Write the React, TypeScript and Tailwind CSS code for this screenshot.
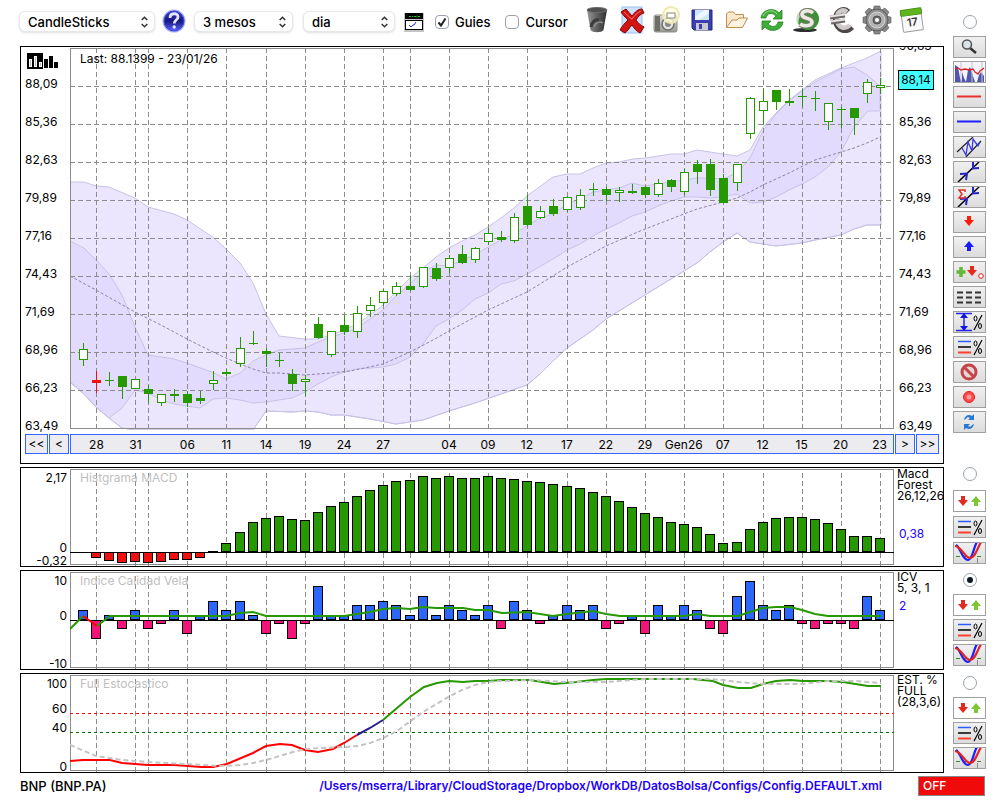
import { useState } from 'react';
import type { ReactNode } from 'react';

type CandleKind = 'up' | 'down' | 'flat' | 'alert';
type Candle = [kind: CandleKind, top: number, bottom: number, high: number, low: number];

const GREEN = '#269900';
const GRID = '#8c8c8c';

// Horizontal centre of the bar with the given index
const barX = (i: number) => 83 + Math.floor(i * 13.0805 + 0.04);

const GRID_BARS = [1, 4, 5, 8, 11, 14, 17, 20, 23, 25, 28, 31, 34, 37, 40, 43, 46, 49, 52, 55, 58, 61];
const PRICE_LINES = [86, 124, 162, 200, 238, 276, 314, 352, 390];

const DATE_LABELS: [number, string][] = [
  [1, '28'], [4, '31'], [8, '06'], [11, '11'], [14, '14'], [17, '19'], [20, '24'],
  [23, '27'], [28, '04'], [31, '09'], [34, '12'], [37, '17'], [40, '22'], [43, '29'],
  [46, 'Gen26'], [49, '07'], [52, '12'], [55, '15'], [58, '20'], [61, '23'],
];

const CANDLES: Candle[] = [
  ['up', 349, 360, 343, 366], ['alert', 380, 383, 371, 393], ['flat', 380, 381, 372, 386],
  ['down', 376, 387, 376, 399], ['up', 379, 389, 379, 389], ['down', 389, 394, 385, 403],
  ['up', 394, 403, 394, 406], ['down', 394, 396, 389, 402], ['down', 394, 403, 391, 407],
  ['down', 398, 401, 391, 404], ['up', 380, 384, 371, 390], ['down', 372, 374, 369, 376],
  ['up', 348, 364, 337, 367], ['flat', 343, 344, 331, 345], ['down', 351, 354, 348, 367],
  ['flat', 360, 361, 353, 367], ['down', 374, 384, 369, 391], ['up', 379, 382, 375, 396],
  ['down', 324, 338, 317, 339], ['up', 331, 355, 331, 357], ['down', 325, 332, 315, 335],
  ['up', 313, 332, 306, 338], ['up', 305, 311, 297, 317], ['up', 291, 303, 289, 306],
  ['up', 286, 294, 282, 296], ['down', 286, 290, 275, 291], ['up', 267, 287, 267, 288],
  ['down', 268, 279, 263, 281], ['up', 258, 268, 255, 273], ['down', 254, 263, 245, 264],
  ['up', 248, 260, 247, 263], ['up', 233, 242, 228, 245], ['down', 237, 240, 231, 242],
  ['up', 217, 241, 213, 243], ['down', 206, 225, 195, 226], ['up', 211, 218, 206, 219],
  ['down', 206, 214, 199, 216], ['up', 197, 210, 196, 212], ['up', 195, 208, 189, 210],
  ['flat', 189, 190, 183, 196], ['down', 189, 195, 187, 201], ['up', 190, 193, 187, 202],
  ['down', 191, 193, 184, 194], ['down', 187, 195, 186, 198], ['up', 183, 195, 179, 197],
  ['down', 180, 187, 179, 192], ['up', 172, 192, 169, 195], ['down', 164, 172, 160, 184],
  ['down', 164, 190, 159, 196], ['down', 178, 203, 174, 203], ['up', 164, 183, 164, 191],
  ['up', 98, 134, 97, 139], ['up', 101, 111, 89, 124], ['down', 90, 102, 90, 110],
  ['down', 101, 103, 89, 106], ['flat', 96, 97, 89, 107], ['flat', 98, 99, 91, 111],
  ['up', 103, 122, 103, 130], ['flat', 109, 110, 107, 128], ['down', 108, 118, 108, 135],
  ['up', 82, 94, 79, 103], ['up', 85, 88, 78, 94],
];

const OUTER_TOP =
  '70,182 84,182 96,186 109,187 135,198 148,207 174,214 187,220 214,238 226,249 240,263 253,283 266,314 279,336 305,339 318,339 331,335 344,330 357,324 370,315 383,305 396,292 410,278 423,268 436,257 449,248 462,241 475,235 488,227 501,218 514,208 527,196 553,177 567,174 580,174 593,168 606,163 619,162 633,159 645,158 671,154 684,154 697,150 710,152 723,154 737,156 750,150 763,127 776,113 789,100 802,90 815,80 841,68 854,63 867,58 881,51';
const OUTER_BOTTOM =
  '70,382 84,394 96,407 109,418 122,428 135,430 253,430 266,411 292,412 305,411 318,412 331,415 344,415 370,419 396,424 423,420 449,411 475,403 501,394 527,385 540,374 553,361 567,348 580,339 593,330 606,319 640,298 671,279 697,263 710,252 723,242 737,233 750,242 776,246 802,243 815,240 841,235 854,229 867,225 881,225';
const INNER_TOP =
  '70,241 84,248 96,260 109,274 122,295 135,327 148,355 174,359 187,363 214,373 226,379 240,373 253,361 266,355 279,350 305,348 318,342 331,337 344,333 357,328 370,319 383,310 396,296 410,284 423,272 436,265 449,266 462,260 475,255 488,247 501,240 514,234 527,226 540,218 553,214 567,204 580,199 593,192 606,190 619,188 632,183 645,186 658,184 671,182 684,180 697,178 710,178 723,179 737,173 750,158 763,131 776,114 789,101 802,91 815,82 841,69 854,67 867,75 880,86';
const INNER_BOTTOM =
  '70,382 84,394 96,407 109,418 122,408 135,390 148,393 161,400 174,404 187,406 200,408 213,399 226,398 240,400 253,403 266,402 279,400 292,398 305,392 318,384 331,377 344,372 357,369 370,368 383,367 396,364 410,357 423,344 436,326 449,319 462,310 475,299 488,293 501,284 514,281 527,274 553,259 567,250 580,244 593,236 606,229 619,223 632,216 645,212 658,206 671,201 684,197 697,197 710,198 723,197 737,194 750,203 763,202 776,197 789,190 802,184 815,177 828,167 841,152 854,127 868,111 880,111';
const MEDIAN =
  '70,276 96,290 135,312 161,325 187,339 213,352 226,358 240,364 253,369 266,373 279,373 305,375 331,373 350,371 383,364 410,352 433,340 449,331 475,317 488,310 514,298 527,292 553,276 567,267 606,246 640,231 671,219 684,214 697,209 723,202 737,198 750,192 763,185 789,173 815,160 828,156 841,152 854,148 867,143 880,137';

const MACD = [
  0, 6, 9, 11, 10, 11, 10, 8, 8, 6, -1, -9, -20, -30, -34, -36, -33, -32, -40, -46, -50, -56,
  -62, -67, -71, -72, -76, -74, -76, -74, -74, -76, -74, -73, -71, -70, -68, -66, -64, -60, -56,
  -51, -45, -39, -35, -30, -28, -25, -18, -9, -10, -23, -30, -34, -35, -35, -33, -29, -23, -16,
  -16, -14,
];

const ICV = [
  2, -4, 1, -2, 2, -2, -1, 2, -3, 1, 4, 2, 4, 1, -3, -1, -4, -1, 7, 1, 1, 3, 3, 4, 3, 1, 5, 1, 3,
  2, 1, 3, -2, 4, 2, -1, 1, 3, 2, 3, -2, -1, 1, -3, 3, 1, 3, 2, -2, -3, 5, 8, 3, 2, 3, -1, -2, -1,
  -1, -2, 5, 2,
];

const ICV_AVERAGE =
  '97,626 110,616 226,616 240,613 253,612 266,616 344,616 370,612 383,609 396,608 410,609 423,607 436,608 463,608 475,610 488,610 502,613 527,612 553,616 567,614 593,611 606,614 620,616 684,616 697,614 710,616 738,616 750,612 763,608 776,607 790,607 802,610 815,614 828,616 881,616';
const STOCH_LOW =
  '70,761 83,760 110,760 122,763 148,765 174,765 188,766 201,767 213,767 227,764 253,753 266,746 280,744 292,745 305,750 318,752 333,749 344,743 357,735';
const STOCH_HIGH =
  '383,720 397,708 410,697 424,687 437,683 449,681 463,682 475,681 488,681 502,680 530,680 554,684 576,682 593,680 606,679 693,679 713,681 723,685 738,688 751,688 763,684 776,681 790,680 803,681 828,681 843,682 868,686 881,686';
const STOCH_SIGNAL =
  '70,745 96,756 122,760 148,762 186,764 220,766 240,765 253,763 266,760 293,752 306,749 320,748 344,747 358,746 370,743 383,738 397,731 423,712 450,696 462,690 475,685 488,682 502,681 530,680 567,682 606,682 646,679 707,679 723,680 738,682 763,684 803,684 828,681 856,681 881,683';

const toPolygon = (top: string, bottom: string) =>
  `${top} ${bottom.split(' ').reverse().join(' ')}`;

/* ---------- chart drawings ---------- */

function VerticalGrid({ from, to }: { from: number; to: number }) {
  return (
    <g stroke={GRID} strokeDasharray="5 3">
      {GRID_BARS.map((i) => (
        <line key={i} x1={barX(i) + 0.5} x2={barX(i) + 0.5} y1={from} y2={to} />
      ))}
    </g>
  );
}

function CandleShape({ index, candle }: { index: number; candle: Candle }) {
  const [kind, top, bottom, high, low] = candle;
  const x = barX(index);
  const color = kind === 'alert' ? '#f01010' : GREEN;
  return (
    <g>
      <rect x={x} y={high} width="1" height={low - high} fill={color} />
      {kind === 'up' ? (
        <rect x={x - 3.5} y={top + 0.5} width="8" height={bottom - top - 1} fill="#fff" stroke={color} />
      ) : (
        <rect x={x - 4} y={top} width="9" height={bottom - top} fill={color} />
      )}
    </g>
  );
}

function PricePlot() {
  return (
    <svg className="block h-full w-full" viewBox="70 47 824 387" preserveAspectRatio="none">
      <clipPath id="price-area">
        <rect x="70" y="47" width="824" height="383" />
      </clipPath>
      <g clipPath="url(#price-area)">
        <polygon points={toPolygon(OUTER_TOP, OUTER_BOTTOM)} fill="#ebe6fe" stroke="#c8c3e6" />
        <polygon points={toPolygon(INNER_TOP, INNER_BOTTOM)} fill="#e3dbfd" stroke="#c8c3e6" />
        <polyline points={OUTER_BOTTOM} fill="none" stroke="#c8c3e6" />
      </g>
      <polyline points={MEDIAN} fill="none" stroke="#8d84a8" strokeDasharray="3 2" />
      <g stroke={GRID} strokeDasharray="5 3">
        {PRICE_LINES.map((y) => (
          <line key={y} x1="70" x2="894" y1={y + 0.5} y2={y + 0.5} />
        ))}
      </g>
      <VerticalGrid from={48} to={430} />
      <rect x="70.5" y="48.5" width="823" height="380" fill="none" stroke={GRID} />
      {CANDLES.map((candle, i) => (
        <CandleShape key={i} index={i} candle={candle} />
      ))}
    </svg>
  );
}

function MacdPlot() {
  return (
    <svg className="block h-full w-full" viewBox="70 468 824 98" preserveAspectRatio="none">
      <VerticalGrid from={473} to={566} />
      <rect x="70.5" y="469.5" width="823" height="95" fill="none" stroke={GRID} />
      {MACD.map((v, i) =>
        v === 0 ? null : (
          <rect
            key={i}
            x={barX(i) - 4.5}
            y={v > 0 ? 552.5 : 552.5 + v}
            width="9"
            height={v > 0 ? v - 1 : Math.max(-v - 1, 1)}
            fill={v > 0 ? '#f01010' : GREEN}
            stroke="#000"
          />
        )
      )}
      <line x1="70" x2="894" y1="552.5" y2="552.5" stroke="#000" />
    </svg>
  );
}

function IcvPlot() {
  return (
    <svg className="block h-full w-full" viewBox="70 571 824 98" preserveAspectRatio="none">
      <VerticalGrid from={576} to={669} />
      <rect x="70.5" y="572.5" width="823" height="95" fill="none" stroke={GRID} />
      {ICV.map((v, i) => {
        const size = v > 0 ? Math.round(v * 4.86) : -v * 5 - 2;
        return (
          <rect
            key={i}
            x={barX(i) - 4.5}
            y={v > 0 ? 620.5 - size : 620.5}
            width="9"
            height={v > 0 ? size - 1 : size}
            fill={v > 0 ? '#2b66ff' : '#f2147a'}
            stroke="#000"
          />
        );
      })}
      <line x1="70" x2="894" y1="620.5" y2="620.5" stroke="#000" />
      <g fill="none" strokeWidth="2">
        <polyline points="70,629 83,616" stroke={GREEN} />
        <polyline points="83,616 97,626" stroke="#ff0000" />
        <polyline points={ICV_AVERAGE} stroke={GREEN} />
      </g>
    </svg>
  );
}

function StochasticPlot() {
  return (
    <svg className="block h-full w-full" viewBox="70 674 824 98" preserveAspectRatio="none">
      <VerticalGrid from={679} to={772} />
      <rect x="70.5" y="675.5" width="823" height="95" fill="none" stroke={GRID} />
      <line x1="70" x2="894" y1="713.5" y2="713.5" stroke="#e01010" strokeDasharray="3 3" />
      <line x1="70" x2="894" y1="732.5" y2="732.5" stroke="#0a6a0a" strokeDasharray="3 3" />
      <g fill="none" strokeWidth="2">
        <polyline points={STOCH_LOW} stroke="#ff0000" />
        <polyline points="357,735 370,728 383,720" stroke="#2a1a90" />
        <polyline points={STOCH_HIGH} stroke={GREEN} />
        <polyline points={STOCH_SIGNAL} stroke="#c4c4c4" strokeDasharray="5 3" />
      </g>
    </svg>
  );
}

/* ---------- toolbar icons ---------- */

function HelpIcon() {
  return (
    <svg width="24" height="26" viewBox="0 0 24 26">
      <defs>
        <linearGradient id="help" x1="0" y1="0" x2="0" y2="1">
          <stop offset="0" stopColor="#3a3fc4" />
          <stop offset="0.5" stopColor="#16167e" />
          <stop offset="1" stopColor="#5a66ff" />
        </linearGradient>
      </defs>
      <circle cx="12" cy="13" r="11.5" fill="#a9b2f5" />
      <circle cx="12" cy="13" r="10" fill="url(#help)" stroke="#3c44d8" />
      <path d="M8 10c0-5.500 8-5.500 8-1 0 3-3.800 3-3.800 6.500" fill="none" stroke="#e4e6ff" strokeWidth="2.800" />
      <circle cx="12.200" cy="19" r="1.700" fill="#e4e6ff" />
    </svg>
  );
}

function QuoteWindowIcon() {
  return (
    <svg width="20" height="19" viewBox="0 0 20 19">
      <rect width="20" height="19" fill="#c4c4c4" />
      <rect x="1" width="18" height="6" fill="#000" />
      <path d="M5 3.500h2m1 0h1m1 0h2m1-1v2m1-1h2" stroke="#20c020" />
      <rect x="1.500" y="7.500" width="17" height="9" fill="#fff" stroke="#000" />
      <path d="m5 12 2 2 2-2 1 0 2-3" fill="none" stroke="#2020e0" />
    </svg>
  );
}

function TrashIcon() {
  return (
    <svg width="22" height="28" viewBox="0 0 22 28">
      <defs>
        <linearGradient id="trash">
          <stop offset="0" stopColor="#9a9a9a" />
          <stop offset="0.400" stopColor="#6a6a6a" />
          <stop offset="1" stopColor="#2e2e2e" />
        </linearGradient>
      </defs>
      <path d="M1 4l3.500 20c2 3 11 3 13 0L21 4z" fill="url(#trash)" />
      <ellipse cx="11" cy="4" rx="10" ry="2.500" fill="#505050" stroke="#6c6c6c" />
      <path d="M5 21c1-6 5-8 8-7" fill="none" stroke="#3a3a3a" strokeWidth="3" />
      <path d="M8 21c2-5 6-6 9-4" fill="none" stroke="#8c8c8c" strokeWidth="1.500" />
    </svg>
  );
}

function DeleteIcon() {
  return (
    <svg width="26" height="28" viewBox="0 0 26 28">
      <rect x="3" y="1" width="20" height="26" fill="#cfe2fb" stroke="#9fc0f0" />
      <path
        d="M2 6l5-3c2 2 4 5 6 7 3-4 6-7 10-7l2 4c-4 1-6 4-8 7 2 3 4 5 8 7l-4 6c-4-2-6-5-8-8-3 3-4 6-7 8l-5-3c2-4 5-7 8-10C6 11 4 9 2 6z"
        fill="#d41414"
        stroke="#7c0808"
      />
      <path d="M5 6c3 2 5 6 8 7 3-4 5-6 9-8" fill="none" stroke="#ff7a70" />
    </svg>
  );
}

function CameraIcon() {
  return (
    <svg width="28" height="28" viewBox="0 0 28 28">
      <defs>
        <linearGradient id="camera" x1="0" y1="0" x2="0" y2="1">
          <stop offset="0" stopColor="#deded8" />
          <stop offset="1" stopColor="#9a9a94" />
        </linearGradient>
      </defs>
      <rect x="1" y="9" width="23" height="17" rx="2" fill="url(#camera)" stroke="#8d8d88" />
      <rect x="2" y="10" width="5" height="15" fill="#6d6d6a" />
      <circle cx="15" cy="18" r="6" fill="#e4e4e4" stroke="#6c6c6c" strokeWidth="1.500" />
      <circle cx="15" cy="18" r="3" fill="#888" />
      <circle cx="18" cy="9" r="8" fill="#fffde0" fillOpacity="0.700" stroke="#efeaae" strokeWidth="2" />
      <rect x="14" y="7" width="8" height="5" fill="#fff" stroke="#8a8a70" />
    </svg>
  );
}

function SaveIcon() {
  return (
    <svg width="22" height="22" viewBox="0 0 22 22">
      <path d="M1 1h20v20H3l-2-2z" fill="#3a3fb0" stroke="#22267c" />
      <rect x="4" y="1" width="14" height="10" fill="#cfe6fa" />
      <path d="M4 8L14 1h4v3L8 11H4z" fill="#eef7ff" />
      <rect x="5" y="14" width="12" height="7" fill="#c9c9d2" />
      <rect x="8" y="15" width="3" height="5" fill="#3a3fb0" />
    </svg>
  );
}

function FolderIcon() {
  return (
    <svg width="24" height="18" viewBox="0 0 24 18">
      <path d="M1.500 16V3l2-2h5l2 2.500h8V7" fill="#fbe9cd" stroke="#c08c50" />
      <path d="M1.500 16.500L7 9h5l2-2h8.500l-5 9.500z" fill="#fff4e0" stroke="#c08c50" />
    </svg>
  );
}

function RefreshIcon() {
  return (
    <svg width="24" height="24" viewBox="0 0 24 24">
      <g fill="#3fae38" stroke="#23861f" strokeWidth="0.800">
        <path d="M1 10C2 1 14-1 19 5l3-3v9h-9l3-3C12 4 7 5 6 10z" />
        <path d="M23 14c-1 9-13 11-18 5l-3 3v-9h9l-3 3c4 4 9 3 10-2z" />
      </g>
      <path d="M3 8c3-6 10-7 14-2" fill="none" stroke="#9be08e" />
    </svg>
  );
}

function DollarIcon() {
  return (
    <svg width="28" height="26" viewBox="0 0 28 26">
      <ellipse cx="12" cy="23" rx="12" ry="2" fill="#2d2d2d" />
      <circle cx="15" cy="12" r="11" fill="#3f8f36" />
      <path d="M15 1a11 11 0 0 0-9 18C4 12 8 5 15 1z" fill="#c9d8c4" />
      <path d="M20 6c-4-4-12-2-11 2s10 3 10 7-8 5-12 2" fill="none" stroke="#7c7c74" strokeWidth="5.500" />
      <path d="M20 6c-4-4-12-2-11 2s10 3 10 7-8 5-12 2" fill="none" stroke="#ecebe2" strokeWidth="3.500" />
    </svg>
  );
}

function EuroIcon() {
  return (
    <svg width="26" height="26" viewBox="0 0 26 26">
      <path d="M23 20c-6 6-15 3-16-6S14 0 19 5" fill="none" stroke="#4d4848" strokeWidth="6" />
      <path d="M21 18c-5 5-12 3-13-5S13 1 18 5" fill="none" stroke="#cfcaca" strokeWidth="4.500" />
      <path d="M1 10.500l15-2M2 15.500l14-2" stroke="#6a6464" strokeWidth="4" />
      <path d="M1 9.500l15-2M2 14.500l14-2" stroke="#e6e2e2" strokeWidth="2" />
    </svg>
  );
}

function GearIcon() {
  return (
    <svg width="30" height="30" viewBox="0 0 30 30">
      <g fill="#8a8a8a" stroke="#525252" strokeWidth="0.600">
        {[0, 45, 90, 135, 180, 225, 270, 315].map((angle) => (
          <path key={angle} d="M11 5.500l1.200-4.500h5.600l1.200 4.500z" transform={`rotate(${angle} 15 15)`} />
        ))}
      </g>
      <circle cx="15" cy="15" r="11" fill="#8f8f8f" stroke="#5b5b5b" />
      <circle cx="15" cy="15" r="8" fill="#b3b3b3" stroke="#d4d4d4" />
      <circle cx="15" cy="15" r="4" fill="#6d6d6d" stroke="#4c4c4c" />
      <circle cx="15" cy="15" r="2" fill="#fff" />
    </svg>
  );
}

function CalendarIcon() {
  return (
    <svg width="26" height="26" viewBox="0 0 26 26">
      <g transform="rotate(-8 13 13)">
        <rect x="3" y="3" width="20" height="21" rx="1" fill="#fafafa" stroke="#9b9b9b" />
        <rect x="2.500" y="2" width="21" height="6" rx="1" fill="#5fb51e" stroke="#4a9414" />
        <text x="13" y="19" textAnchor="middle" fontSize="11" fontWeight="600" fill="#3a3a3a">17</text>
      </g>
    </svg>
  );
}

function BarsLogo() {
  return (
    <svg width="32" height="16" viewBox="0 0 32 16">
      <rect width="16" height="16" fill="#000" />
      <g fill="#bbb" stroke="#fff">
        <rect x="2.500" y="6.500" width="2" height="7" />
        <rect x="7.500" y="3.500" width="2" height="10" />
        <rect x="12.500" y="9.500" width="2" height="4" />
      </g>
      <path d="M17 6h4v9h-4zM22 3h4v12h-4zM27 9h4v6h-4z" fill="#000" />
    </svg>
  );
}

/* ---------- side tool icons, all on a 31x20 canvas ---------- */

const ARROW_DOWN = 'M-2-5h4v4h3l-5 6-5-6h3z';
const ARROW_UP = 'M-2 5h4V1h3l-5-6-5 6h3z';

function Percent() {
  return (
    <g fill="none" stroke="#000">
      <path d="M28 3l-8 15" strokeWidth="1.200" />
      <ellipse cx="21.500" cy="6.500" rx="1.500" ry="2.500" />
      <ellipse cx="26" cy="14" rx="1.500" ry="2.500" />
    </g>
  );
}

const MAGNIFIER = (
  <>
    <path d="M16 11l6 5" stroke="#333" strokeWidth="2.500" />
    <circle cx="13" cy="7.500" r="4.500" fill="#d9e4e8" stroke="#555" strokeWidth="1.500" />
  </>
);
const AREA_CHART = (
  <>
    <rect width="31" height="20" fill="#f4f4fa" />
    <path d="M1 20V3l3 2 2 11 2 4V10l2 6 2 4 2-12 2-3 3 9 2 6h2l2-7 2-3 3 4v6z" fill="#5158ac" />
    <path d="M7 0v20M18 0v20M28 0v20" stroke="#c4c4d6" />
    <path d="M1 7l3-1 3 2 4-1 4 1 4-1 2 3 3 2 2-3 4-3" fill="none" stroke="#e02020" strokeWidth="1.300" />
  </>
);
const RED_LINE = <path d="M3 9.500h24" stroke="#e83030" strokeWidth="2" />;
const BLUE_LINE = <path d="M3 9.500h24" stroke="#2020ff" strokeWidth="2" />;
const CHANNEL = (
  <>
    <path d="M3 15L19 0M12 20L27 4" stroke="#222" strokeWidth="1.200" />
    <path d="M8 11l4 7 2-13 4 9 1-12 5 7 2-4" fill="none" stroke="#3a3ae8" strokeWidth="1.300" />
  </>
);
const CROSS_ARROWS = (
  <>
    <path d="M4 20L25 0" stroke="#000" strokeWidth="1.500" />
    <path d="M6 12l7-.500L12 18M19 0v6.500l6-.500" fill="none" stroke="#2424c8" strokeWidth="2" />
  </>
);
const SIGMA_ARROWS = (
  <>
    {CROSS_ARROWS}
    <path d="M11 5V3H5l3 4-3 4h6V9" fill="none" stroke="#e03020" strokeWidth="1.500" />
  </>
);
const RED_DOWN = <path d={ARROW_DOWN} fill="#ff1a0a" transform="translate(15 9)" />;
const BLUE_UP = <path d={ARROW_UP} fill="#1a1aff" transform="translate(15 9)" />;
const ADD_SIGNAL = (
  <>
    <path d="M7 5v10M2.500 10h9" stroke="#62b83a" strokeWidth="3.500" />
    <path d={ARROW_DOWN} fill="#e8281c" transform="translate(18 9)" />
    <circle cx="27" cy="14" r="2.300" fill="#fff" stroke="#e02020" />
  </>
);
const DASHED_ROWS = (
  <path d="M3 5.500h24M3 10.500h24M3 15.500h24" stroke="#333" strokeWidth="1.800" strokeDasharray="6 3" />
);
const RANGE_PERCENT = (
  <>
    <path d="M2 1.500h16M2 18.500h16M10 3v14" stroke="#2424e8" strokeWidth="1.500" />
    <path d="M10 1l4 5H6zM10 19l4-5H6z" fill="#1414e0" />
    <Percent />
  </>
);
const LEVELS_PERCENT = (
  <>
    <path d="M4 4.500h13" stroke="#2b5cff" strokeWidth="1.500" />
    <path d="M4 10h13" stroke="#000" strokeWidth="1.500" />
    <path d="M4 15.500h13" stroke="#ff4030" strokeWidth="2" />
    <Percent />
  </>
);
const FORBIDDEN = (
  <>
    <circle cx="15" cy="10" r="7" fill="#e6d6d8" stroke="#c4444a" strokeWidth="3" />
    <path d="M10 5l10 10" stroke="#c4444a" strokeWidth="3" />
  </>
);
const RECORD = (
  <>
    <circle cx="15" cy="10" r="5.500" fill="#ff4a4a" stroke="#e02020" />
    <circle cx="15" cy="10" r="2.500" fill="#ff9a9a" />
  </>
);
const SYNC = (
  <g fill="#2c78d0">
    <path d="M10 8c1-5 5-6 8-4l2-2v6h-6l2-2c-2-1-3-1-4 1z" />
    <path d="M20 12c-1 5-5 6-8 4l-2 2v-6h6l-2 2c2 1 3 1 4-1z" />
  </g>
);
const UP_DOWN = (
  <>
    <rect width="31" height="20" fill="#fff" />
    <path d={ARROW_DOWN} fill="#e8281c" transform="translate(9 10)" />
    <path d={ARROW_UP} fill="#7cc832" transform="translate(22 10)" />
  </>
);
const CROSSOVER = (
  <>
    <path d="M2 13.500h28" stroke="#3a8a2a" strokeDasharray="4 3" />
    <path d="M23.500 15v5" stroke="#888" />
    <path d="M2 2c5 3 6 15 12 15 5-1 5-12 9-18" fill="none" stroke="#2020f0" strokeWidth="2.200" />
    <path d="M1 3c7 1 9 11 15 12 5 0 7-9 11-16" fill="none" stroke="#e82020" strokeWidth="2.200" />
  </>
);

const DRAW_TOOLS: [string, ReactNode][] = [
  ['Zoom', MAGNIFIER],
  ['Volume', AREA_CHART],
  ['Resistance line', RED_LINE],
  ['Support line', BLUE_LINE],
  ['Channel', CHANNEL],
  ['Trend', CROSS_ARROWS],
  ['Trend sum', SIGMA_ARROWS],
  ['Sell mark', RED_DOWN],
  ['Buy mark', BLUE_UP],
  ['Add signal', ADD_SIGNAL],
  ['Rows', DASHED_ROWS],
  ['Range percent', RANGE_PERCENT],
  ['Level percent', LEVELS_PERCENT],
  ['Clear', FORBIDDEN],
  ['Record', RECORD],
  ['Sync', SYNC],
];

const PANEL_TOOLS: [string, ReactNode][] = [
  ['Signals', UP_DOWN],
  ['Levels', LEVELS_PERCENT],
  ['Crossover', CROSSOVER],
];

const TOOL_GROUPS = [
  { name: 'macd', spacing: 'gap-1' },
  { name: 'icv', spacing: 'gap-[3px] pt-[3px]' },
  { name: 'stochastic', spacing: 'gap-[3px] pt-[3px]' },
];

const ACTIONS: [string, ReactNode][] = [
  ['Trash', <TrashIcon />],
  ['Delete', <DeleteIcon />],
  ['Snapshot', <CameraIcon />],
  ['Save', <SaveIcon />],
  ['Open', <FolderIcon />],
  ['Refresh', <RefreshIcon />],
  ['Dollar', <DollarIcon />],
  ['Euro', <EuroIcon />],
  ['Settings', <GearIcon />],
  ['Calendar', <CalendarIcon />],
];

/* ---------- controls ---------- */

function SelectBox({ label, options, className }: { label: string; options: string[]; className: string }) {
  return (
    <div className={`relative ${className}`}>
      <select
        aria-label={label}
        className="h-[21px] w-full appearance-none rounded-md border border-gray-200 bg-white pl-2 pr-6 text-[13px] leading-4 font-medium shadow-sm"
      >
        {options.map((option) => (
          <option key={option}>{option}</option>
        ))}
      </select>
      <svg className="pointer-events-none absolute top-[5px] right-[7px]" width="7" height="12" viewBox="0 0 7 12">
        <path d="M0.700 4L3.500 1.200 6.300 4M0.700 8l2.800 2.800L6.300 8" fill="none" stroke="#333" strokeWidth="1.500" />
      </svg>
    </div>
  );
}

function CheckBox({ label, defaultChecked = false }: { label: string; defaultChecked?: boolean }) {
  const [checked, setChecked] = useState(defaultChecked);
  return (
    <label className="flex items-center gap-1.5 text-[13px] leading-4 font-medium">
      <span className="relative flex">
        <input
          type="checkbox"
          checked={checked}
          onChange={(e) => setChecked(e.target.checked)}
          className="size-3.5 appearance-none rounded border border-gray-400 bg-white"
        />
        {checked && (
          <svg className="pointer-events-none absolute inset-0" width="14" height="14" viewBox="0 0 14 14">
            <path d="M3.500 7.500l2.500 3 4.500-7" fill="none" stroke="#222" strokeWidth="2" />
          </svg>
        )}
      </span>
      {label}
    </label>
  );
}

function PanelRadio({ name, selected, onSelect }: { name: string; selected: string; onSelect: (name: string) => void }) {
  return (
    <span className="relative flex size-3.5 self-center">
      <input
        type="radio"
        name="panel"
        aria-label={name}
        checked={selected === name}
        onChange={() => onSelect(name)}
        className="size-3.5 appearance-none rounded-full border border-gray-400 bg-white"
      />
      {selected === name && (
        <span className="pointer-events-none absolute inset-1 rounded-full bg-gray-900" />
      )}
    </span>
  );
}

function ToolButton({ label, children }: { label: string; children: ReactNode }) {
  return (
    <button
      type="button"
      aria-label={label}
      className="h-[22px] w-[33px] shrink-0 border border-[#a0a0a0] bg-linear-to-b from-[#f0f0f0] to-[#dcdcdc]"
    >
      <svg className="block" width="31" height="20" viewBox="0 0 31 20">
        {children}
      </svg>
    </button>
  );
}

function NavButton({ children, className }: { children: ReactNode; className: string }) {
  return (
    <button type="button" className={`h-5 border border-[#3366ff] bg-[#ebebf0] ${className}`}>
      {children}
    </button>
  );
}

function Toolbar() {
  return (
    <header className="flex h-[46px] items-start pt-[11px]">
      <SelectBox label="Chart type" className="-ml-px w-[136px]" options={['CandleSticks', 'Barres', 'Linia']} />
      <button type="button" aria-label="Help" className="-mt-[3px] ml-[7px]">
        <HelpIcon />
      </button>
      <SelectBox label="Range" className="ml-2 w-[99px]" options={['3 mesos', '6 mesos', '1 any']} />
      <SelectBox label="Interval" className="ml-2.5 w-[92px]" options={['dia', 'setmana', 'mes']} />
      <div className="flex h-[22px] flex-1 items-center pl-[9px]">
        <button type="button" aria-label="Quotes" className="mr-[11px]">
          <QuoteWindowIcon />
        </button>
        <CheckBox label="Guies" defaultChecked />
        <span className="w-[15px]" />
        <CheckBox label="Cursor" />
        <div className="-mt-1 ml-3 flex items-center">
          {ACTIONS.map(([label, icon]) => (
            <button key={label} type="button" aria-label={label} className="flex w-[35px] justify-center">
              {icon}
            </button>
          ))}
        </div>
      </div>
    </header>
  );
}

function PriceAxisLabel({ children }: { children: ReactNode }) {
  return <div className="h-[38px] leading-4">{children}</div>;
}

const LEFT_PRICES = ['88,09', '85,36', '82,63', '79,89', '77,16', '74,43', '71,69', '68,96', '66,23'];

function PricePanel() {
  return (
    <section className="h-[418px] overflow-hidden border border-black">
      <div className="flex h-[387px]">
        <div className="w-[49px] shrink-0 pl-1">
          <div className="h-[29px] pt-1.5 pl-0.5">
            <BarsLogo />
          </div>
          {LEFT_PRICES.map((price) => (
            <PriceAxisLabel key={price}>{price}</PriceAxisLabel>
          ))}
          <div className="leading-4">63,49</div>
        </div>
        <div className="relative min-w-0 flex-1">
          <PricePlot />
          <span className="absolute top-1 left-2.5 leading-4">Last: 88.1399 - 23/01/26</span>
        </div>
        <div className="w-[49px] shrink-0 pl-[5px]">
          <div className="-mt-[9px] h-8 leading-4">90,83</div>
          <div className="mb-6 -ml-px flex h-5 w-9 items-center justify-center border border-black bg-[#40ffff]">
            88,14
          </div>
          {LEFT_PRICES.slice(1).map((price) => (
            <PriceAxisLabel key={price}>{price}</PriceAxisLabel>
          ))}
          <div className="leading-4">63,49</div>
        </div>
      </div>
      <div className="flex">
        <div className="flex w-[49px] shrink-0 gap-px pl-1">
          <NavButton className="w-[23px]">&lt;&lt;</NavButton>
          <NavButton className="w-5">&lt;</NavButton>
        </div>
        <div className="relative h-5 min-w-0 flex-1 border border-[#3366ff] bg-[#ebebf0]">
          {DATE_LABELS.map(([index, label]) => (
            <span
              key={index}
              className="absolute top-0.5 -translate-x-1/2 leading-4"
              style={{ left: `${((barX(index) - 70.5) / 823) * 100}%` }}
            >
              {label}
            </span>
          ))}
        </div>
        <div className="flex w-[49px] shrink-0 gap-px pl-px">
          <NavButton className="w-5">&gt;</NavButton>
          <NavButton className="w-[23px]">&gt;&gt;</NavButton>
        </div>
      </div>
    </section>
  );
}

type IndicatorProps = {
  title: string;
  scale: ReactNode;
  legend: string[];
  value?: ReactNode;
  children: ReactNode;
};

function IndicatorPanel({ title, scale, legend, value, children }: IndicatorProps) {
  return (
    <section className="flex h-[100px] overflow-hidden border border-black">
      <div className="flex w-[49px] shrink-0 flex-col pr-[3px] text-right leading-[13px]">{scale}</div>
      <div className="relative min-w-0 flex-1">
        {children}
        <h2 className="absolute top-0.5 left-2.5 leading-4 text-[#c0c0c0]">{title}</h2>
      </div>
      <div className="w-[49px] shrink-0 overflow-hidden pl-[3px] leading-[11px] whitespace-nowrap">
        {legend.map((line) => (
          <div key={line}>{line}</div>
        ))}
        {value}
      </div>
    </section>
  );
}

export default function App() {
  const [panel, setPanel] = useState('icv');

  return (
    <div className="min-h-screen bg-white pl-5 font-['Inter',sans-serif] text-[12px] text-black">
      <div className="flex">
        <main className="min-w-0 flex-1">
          <Toolbar />
          <div className="flex flex-col gap-[3px]">
            <PricePanel />
            <IndicatorPanel
              title="Histgrama MACD"
              legend={['Macd', 'Forest', '26,12,26']}
              value={<div className="mt-[27px] pl-0.5 text-[#2200ff]">0,38</div>}
              scale={
                <>
                  <span className="mt-[3px]">2,17</span>
                  <span className="mt-[57px]">0</span>
                  <span>-0,32</span>
                </>
              }
            >
              <MacdPlot />
            </IndicatorPanel>
            <IndicatorPanel
              title="Indice Calidad Vela"
              legend={['ICV', '5, 3, 1']}
              value={<div className="mt-[7px] pl-0.5 text-[#2200ff]">2</div>}
              scale={
                <>
                  <span className="mt-[3px]">10</span>
                  <span className="mt-[22px]">0</span>
                  <span className="mt-[35px]">-10</span>
                </>
              }
            >
              <IcvPlot />
            </IndicatorPanel>
            <IndicatorPanel
              title="Full Estocastico"
              legend={['EST. %', 'FULL', '(28,3,6)']}
              scale={
                <>
                  <span className="mt-[3px]">100</span>
                  <span className="mt-3">60</span>
                  <span className="mt-1.5">40</span>
                  <span className="mt-[26px]">0</span>
                </>
              }
            >
              <StochasticPlot />
            </IndicatorPanel>
          </div>
        </main>

        <aside className="mr-[14px] ml-[9px] flex w-[33px] shrink-0 flex-col pt-[15px]">
          <PanelRadio name="price" selected={panel} onSelect={setPanel} />
          <div className="mt-[7px] flex flex-col gap-[3px]">
            {DRAW_TOOLS.map(([label, icon]) => (
              <ToolButton key={label} label={label}>{icon}</ToolButton>
            ))}
          </div>
          <div className="mt-auto flex flex-col gap-[3px]">
            {TOOL_GROUPS.map(({ name, spacing }) => (
              <div key={name} className={`flex h-[100px] flex-col ${spacing}`}>
                <PanelRadio name={name} selected={panel} onSelect={setPanel} />
                <span className="h-px" />
                {PANEL_TOOLS.map(([label, icon]) => (
                  <ToolButton key={label} label={label}>{icon}</ToolButton>
                ))}
              </div>
            ))}
          </div>
        </aside>
      </div>

      <footer className="mt-[3px] mr-[15px] flex h-5 items-center leading-4">
        <span className="text-[13px] font-medium">BNP (BNP.PA)</span>
        <span className="ml-auto font-semibold text-[#2200ff]">
          /Users/mserra/Library/CloudStorage/Dropbox/WorkDB/DatosBolsa/Configs/Config.DEFAULT.xml
        </span>
        <button
          type="button"
          className="ml-9 h-5 w-[67px] border border-[#888] bg-[#f00a0a] pl-1 text-left font-medium text-white"
        >
          OFF
        </button>
      </footer>
    </div>
  );
}
